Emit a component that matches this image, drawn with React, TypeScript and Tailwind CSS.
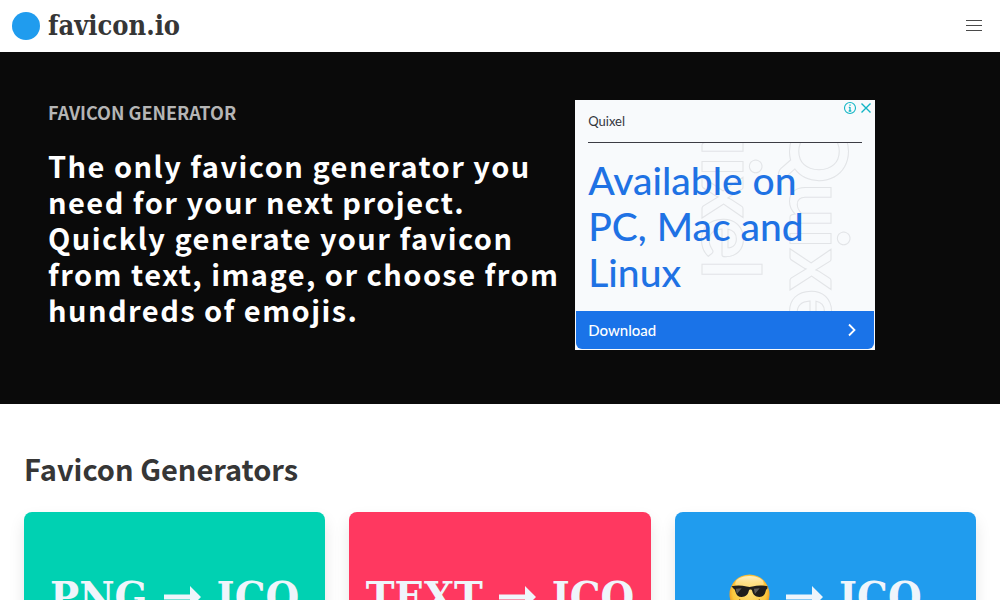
import type { ReactNode } from "react";

const sans = "font-['Noto_Sans_CJK_SC','Open_Sans',sans-serif]";
const slab = "font-['DejaVu_Serif_Condensed','DejaVu_Serif',serif]";
const geo = "font-['Lato','Liberation_Sans',sans-serif]";

function Arrow() {
  return (
    <svg viewBox="0 0 37 24" className="h-6 w-[37px]" fill="currentColor" aria-hidden="true">
      <path d="M0 9.500h26V1l11 11-11 11v-8.500H0z" />
    </svg>
  );
}

function CoolFace() {
  return (
    <svg viewBox="0 0 42 42" className="mb-1.5 h-[41px] w-[41px]" role="img" aria-label="Emoji">
      <defs>
        <radialGradient id="face" cx="50%" cy="45%" r="56%">
          <stop offset="0" stopColor="#ffe07a" />
          <stop offset="0.75" stopColor="#fcc83d" />
          <stop offset="1" stopColor="#ea8a1c" />
        </radialGradient>
        <linearGradient id="shine" x1="0" y1="0" x2="0" y2="1">
          <stop offset="0" stopColor="#fff0c4" />
          <stop offset="1" stopColor="#ffdf80" stopOpacity="0.3" />
        </linearGradient>
      </defs>
      <circle cx="21" cy="21" r="20.5" fill="url(#face)" />
      <ellipse cx="21" cy="9.500" rx="14.500" ry="7.500" fill="url(#shine)" />
      <path d="M2.500 12.500c5.500-1 11-.9 15.500.4 2 .6 4 .6 6 0 4.500-1.300 10-1.400 15.500-.4l-.3 2.700c-1.100.5-1.400 1.400-1.800 3-.9 3.800-3 5.300-6.400 5.300-4 0-6.400-2.200-7.300-6.300-.4-1.600-3-1.600-3.400 0-.9 4.100-3.300 6.300-7.300 6.300-3.400 0-5.500-1.500-6.400-5.300-.4-1.600-.7-2.500-1.800-3z" fill="#1f1d1b" />
      <path d="M7 15.200l6-.6-5 6zM25.500 15.200l6-.6-5 6z" fill="#5d5955" />
      <path d="M11 27q10 9 20 0" fill="none" stroke="#7b4618" strokeWidth="2" strokeLinecap="round" />
    </svg>
  );
}

function Card({ color, label, children }: { color: string; label: string; children: ReactNode }) {
  return (
    <a href="#" aria-label={label} className={`block rounded-lg shadow-[0_8px_16px_rgba(10,10,10,0.1)] ${color}`}>
      <div className={`flex h-[170px] items-center justify-center gap-4 whitespace-nowrap text-[43px] font-bold leading-none text-[#eff5fb] ${slab}`}>
        {children}
      </div>
    </a>
  );
}

function Ad() {
  return (
    <aside className={`relative flex h-[250px] w-[300px] shrink-0 flex-col overflow-hidden bg-[#f8fafc] p-px ${geo}`}>
      <div className="mx-3 flex h-[42px] items-center border-b border-[#3c3c44] text-[13px] text-[#34363c]">Quixel</div>
      <div className="relative flex-1 overflow-hidden px-3 pt-3.5">
        <span
          aria-hidden="true"
          className="absolute -top-24 left-[107px] text-[80px] font-bold leading-[100px] text-transparent [-webkit-text-stroke:1px_#e2e4e7] [writing-mode:vertical-rl]"
        >
          Quixel
        </span>
        <span
          aria-hidden="true"
          className="absolute -top-6 left-[195px] text-[80px] font-bold leading-[100px] text-transparent [-webkit-text-stroke:1px_#e2e4e7] [writing-mode:vertical-rl]"
        >
          Quixel
        </span>
        <p className="relative text-[39px] font-medium leading-[46px] text-[#1f72e4]">
          Available on
          <br />
          PC, Mac and
          <br />
          Linux
        </p>
      </div>
      <a href="#" className="flex h-[38px] items-center justify-between rounded-b-md bg-[#1a73e8] px-3 text-[15px] font-medium text-white">
        Download
        <svg viewBox="0 0 20 20" className="h-5 w-5" fill="none" stroke="currentColor" strokeWidth="1.8" aria-hidden="true">
          <path d="M7 4.500l5.500 5.500L7 15.500" />
        </svg>
      </a>
      <div className="absolute right-0.5 top-px flex gap-0.5 text-[#12b5c5]">
        <button aria-label="Ad information" className="block">
          <svg viewBox="0 0 14 14" className="h-3.5 w-3.5" fill="none" stroke="currentColor">
            <circle cx="7" cy="7" r="5.500" strokeWidth="1.100" />
            <path d="M7 6v4.200M5.800 6.300H7M5.700 10h2.600M7 3.400v1.300" strokeWidth="1.300" />
          </svg>
        </button>
        <button aria-label="Close ad" className="block">
          <svg viewBox="0 0 14 14" className="h-3.5 w-3.5" fill="none" stroke="currentColor" strokeWidth="1.400">
            <path d="M2.500 2.500l9 9M11.500 2.500l-9 9" />
          </svg>
        </button>
      </div>
    </aside>
  );
}

export default function App() {
  return (
    <div className={`h-screen overflow-hidden bg-white text-[#363636] ${sans}`}>
      <header className="flex h-[52px] items-start justify-between pl-3">
        <a href="#" className="flex h-[52px] items-center gap-2">
          <span className="h-7 w-7 rounded-full bg-[#209cee]" />
          <span className={`text-[27px] font-bold leading-8 ${slab}`}>favicon.io</span>
        </a>
        <button aria-label="Menu" className="flex h-[51px] w-[52px] flex-col items-center justify-center gap-1">
          <span className="h-px w-4 bg-[#4a4a4a]" />
          <span className="h-px w-4 bg-[#4a4a4a]" />
          <span className="h-px w-4 bg-[#4a4a4a]" />
        </button>
      </header>

      <section className="flex items-start gap-3 bg-[#0a0a0a] px-12 pb-[54px] pt-12">
        <div className="w-[57%]">
          <h1 className="text-[18px] font-bold leading-6 text-[#b5b5b5]">FAVICON GENERATOR</h1>
          <p className="mt-[23px] text-[29px] font-bold leading-9 tracking-wider text-white">
            The only favicon generator you need for your next project. Quickly generate your favicon from text, image, or
            choose from hundreds of emojis.
          </p>
        </div>
        <Ad />
      </section>

      <main className="px-6 pt-12">
        <h2 className="text-[29px] font-bold leading-8">Favicon Generators</h2>
        <div className="mt-7 grid grid-cols-3 gap-6">
          <Card color="bg-[#00d1b2]" label="PNG to ICO">
            <span>PNG</span>
            <Arrow />
            <span>ICO</span>
          </Card>
          <Card color="bg-[#ff3860]" label="Text to ICO">
            <span>TEXT</span>
            <Arrow />
            <span>ICO</span>
          </Card>
          <Card color="bg-[#209cee]" label="Emoji to ICO">
            <CoolFace />
            <Arrow />
            <span>ICO</span>
          </Card>
        </div>
      </main>
    </div>
  );
}
